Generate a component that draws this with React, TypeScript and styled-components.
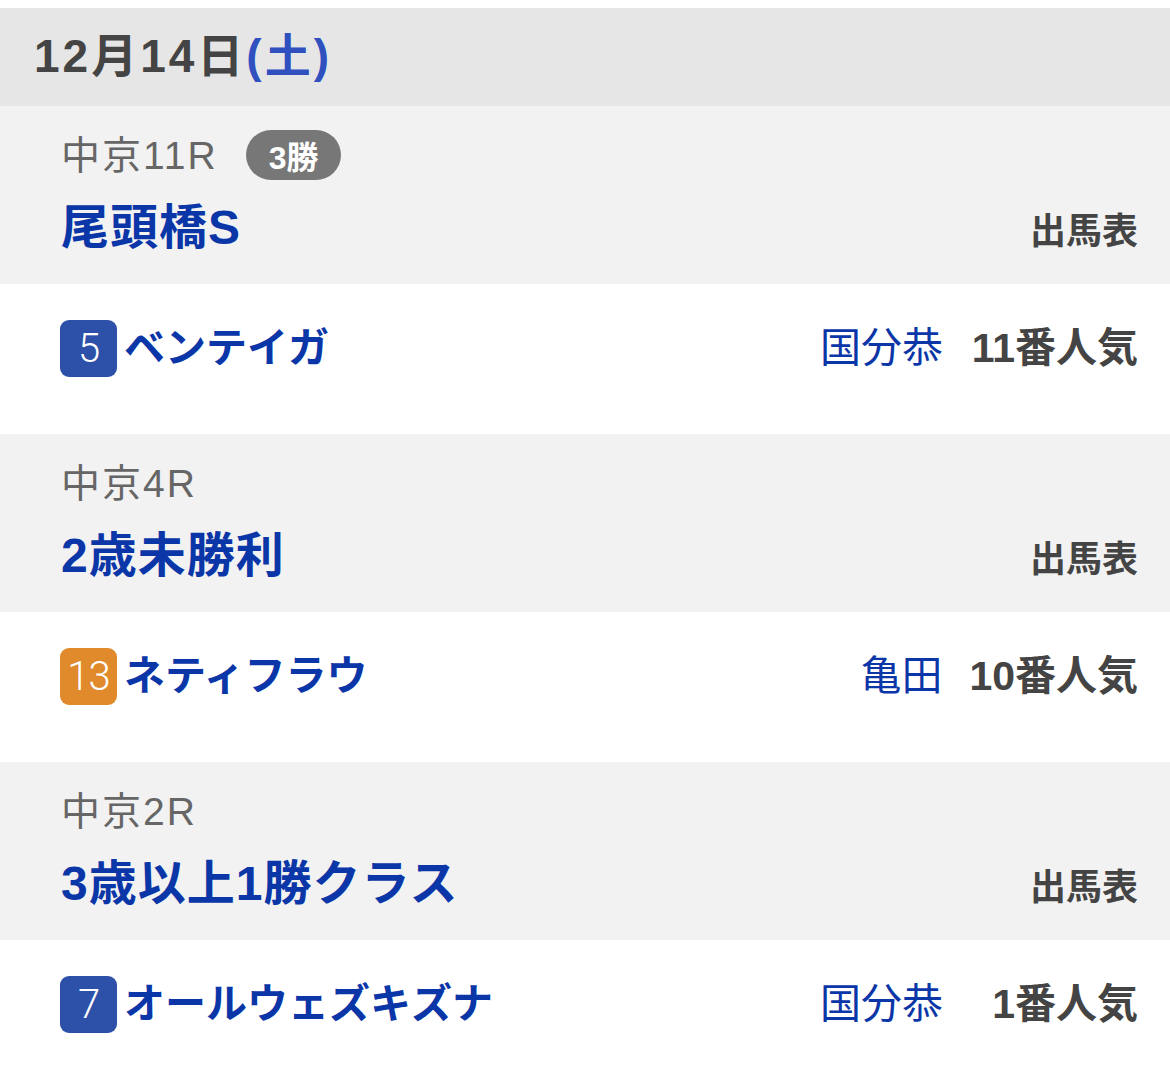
import styled, { createGlobalStyle } from 'styled-components';

type Race = {
  label: string;
  grade?: string;
  title: string;
  horse: { num: number; color: string; name: string; jockey: string; pop: string };
};

const races: Race[] = [
  {
    label: '中京11R',
    grade: '3勝',
    title: '尾頭橋S',
    horse: { num: 5, color: '#2d50a8', name: 'ベンテイガ', jockey: '国分恭', pop: '11番人気' },
  },
  {
    label: '中京4R',
    title: '2歳未勝利',
    horse: { num: 13, color: '#e08a2c', name: 'ネティフラウ', jockey: '亀田', pop: '10番人気' },
  },
  {
    label: '中京2R',
    title: '3歳以上1勝クラス',
    horse: { num: 7, color: '#2d50a8', name: 'オールウェズキズナ', jockey: '国分恭', pop: '1番人気' },
  },
];

const App = () => {
  return (
    <>
      <GlobalStyle />
      <Page>
        <DateHeader>
          12月14日<Weekday>(土)</Weekday>
        </DateHeader>
        {races.map((race, index) => (
          <div key={index}>
            <RaceBlock>
              <RaceMeta>
                <RaceLabel>{race.label}</RaceLabel>
                {race.grade && <GradePill>{race.grade}</GradePill>}
              </RaceMeta>
              <RaceTitleRow>
                <RaceTitle>{race.title}</RaceTitle>
                <CardLink>出馬表</CardLink>
              </RaceTitleRow>
            </RaceBlock>
            <HorseRow>
              <HorseLeft>
                <NumBadge $bg={race.horse.color}>{race.horse.num}</NumBadge>
                <HorseName>{race.horse.name}</HorseName>
              </HorseLeft>
              <HorseRight>
                <Jockey>{race.horse.jockey}</Jockey>
                <Popularity>{race.horse.pop}</Popularity>
              </HorseRight>
            </HorseRow>
          </div>
        ))}
      </Page>
    </>
  );
};

const GlobalStyle = createGlobalStyle`
  body {
    margin: 0;
    background: #fff;
    font-family: 'Liberation Sans', 'Noto Sans CJK JP', sans-serif;
  }
`;

const Page = styled.div`
  padding-top: 8px;
  width: 1170px;
`;

const DateHeader = styled.div`
  height: 98px;
  box-sizing: border-box;
  display: flex;
  align-items: center;
  padding: 0 0 10px 34px;
  background: #e6e6e6;
  color: #444;
  font-size: 46px;
  font-weight: bold;
  letter-spacing: 3px;
`;

const Weekday = styled.span`
  color: #3050c0;
`;

const RaceBlock = styled.div`
  box-sizing: border-box;
  height: 178px;
  background: #f2f2f2;
  padding: 24px 32px 0 61px;
`;

const RaceMeta = styled.div`
  display: flex;
  align-items: center;
  gap: 28px;
  height: 50px;
`;

const RaceLabel = styled.span`
  font-size: 39px;
  line-height: 50px;
  color: #666;
  letter-spacing: 2px;
  padding-top: 2px;
`;

const GradePill = styled.span`
  height: 50px;
  padding: 0 23px;
  border-radius: 25px;
  background: #777;
  color: #fff;
  font-size: 32px;
  font-weight: bold;
  display: flex;
  align-items: center;
`;

const RaceTitleRow = styled.div`
  margin-top: 18px;
  display: flex;
  justify-content: space-between;
  align-items: baseline;
`;

const RaceTitle = styled.span`
  font-size: 48px;
  line-height: 60px;
  font-weight: bold;
  color: #0a36a8;
  letter-spacing: 1px;
`;

const CardLink = styled.span`
  font-size: 36px;
  font-weight: bold;
  color: #444;
`;

const HorseRow = styled.div`
  box-sizing: border-box;
  height: 150px;
  background: #fff;
  padding: 36px 32px 0 60px;
  display: flex;
  align-items: flex-start;
  justify-content: space-between;
`;

const HorseLeft = styled.div`
  display: flex;
  align-items: center;
  gap: 7px;
`;

const NumBadge = styled.span<{ $bg: string }>`
  width: 57px;
  height: 57px;
  border-radius: 9px;
  background: ${p => p.$bg};
  color: #fff;
  font-family: Roboto, sans-serif;
  font-weight: 300;
  font-size: 40px;
  letter-spacing: -1px;
  display: flex;
  align-items: center;
  justify-content: center;
`;

const HorseName = styled.span`
  font-size: 41px;
  line-height: 57px;
  font-weight: bold;
  color: #0a36a8;
`;

const HorseRight = styled.div`
  display: flex;
  align-items: center;
  gap: 27px;
`;

const Jockey = styled.span`
  font-size: 41px;
  line-height: 57px;
  color: #0a36a8;
`;

const Popularity = styled.span`
  min-width: 168px;
  text-align: right;
  font-size: 41px;
  line-height: 57px;
  font-weight: bold;
  color: #444;
`;

export default App;
